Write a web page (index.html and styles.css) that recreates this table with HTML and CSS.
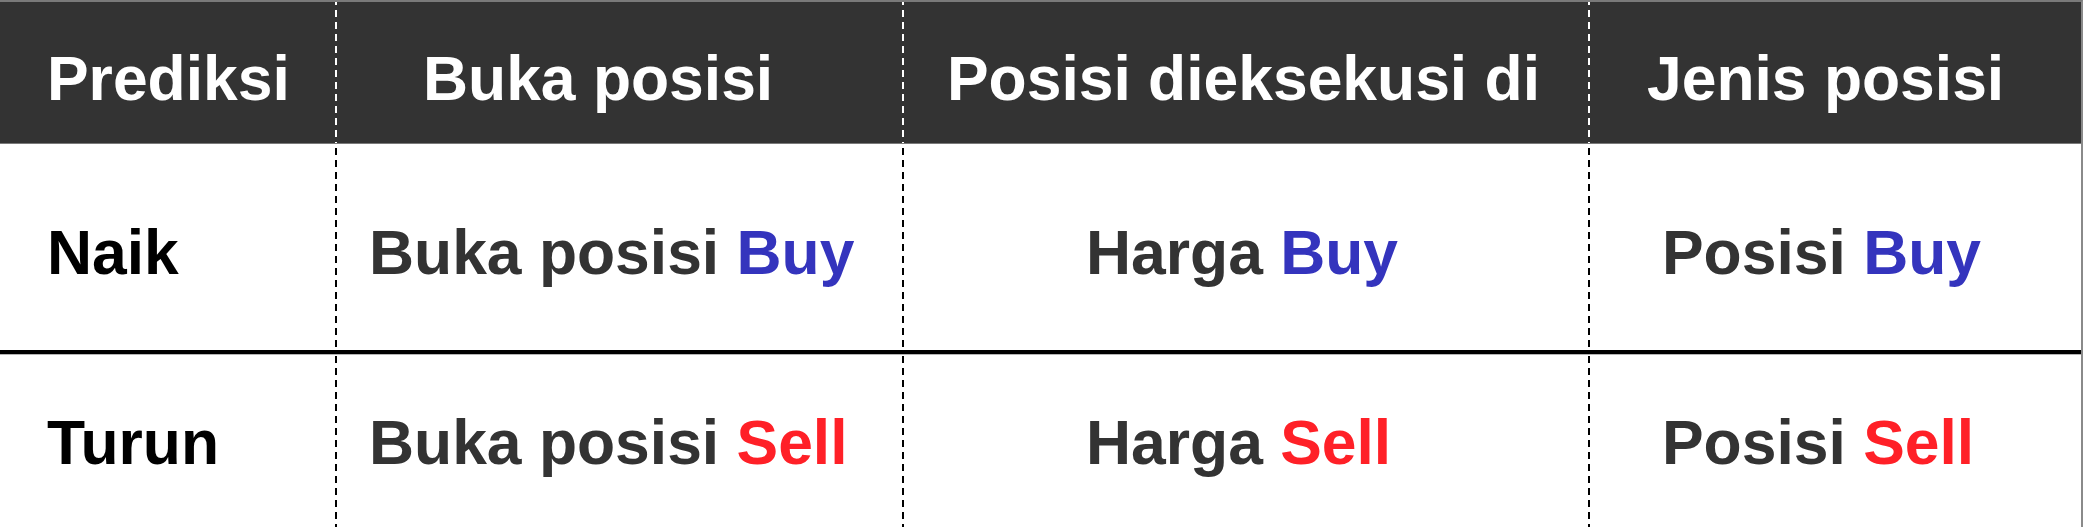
FILE: index.html
```html
<!DOCTYPE html>
<html lang="id">
<head>
<meta charset="utf-8">
<title>Prediksi posisi</title>
<link rel="stylesheet" href="styles.css">
</head>
<body>
<div class="table">
  <div class="row head">
    <div class="cell c1">Prediksi</div>
    <div class="cell c2">Buka posisi</div>
    <div class="cell c3">Posisi dieksekusi di</div>
    <div class="cell c4">Jenis posisi</div>
  </div>
  <div class="row body r1">
    <div class="cell c1 label">Naik</div>
    <div class="cell c2">Buka posisi <span class="buy">Buy</span></div>
    <div class="cell c3">Harga <span class="buy">Buy</span></div>
    <div class="cell c4">Posisi <span class="buy">Buy</span></div>
  </div>
  <div class="row body r2">
    <div class="cell c1 label">Turun</div>
    <div class="cell c2">Buka posisi <span class="sell">Sell</span></div>
    <div class="cell c3">Harga <span class="sell">Sell</span></div>
    <div class="cell c4">Posisi <span class="sell">Sell</span></div>
  </div>
</div>
</body>
</html>
```

FILE: styles.css
```css
html, body {
  margin: 0;
  padding: 0;
  background: #ffffff;
}

body {
  font-family: "Liberation Sans", Arial, sans-serif;
  font-weight: bold;
  font-size: 62.4px;
  overflow: hidden;
}

.table {
  width: 2081px;
  border-top: 2px solid #7a7a7a;
  border-right: 2px solid #8a8a8a;
}

.row {
  display: grid;
  grid-template-columns: 335px 567px 686px 1fr;
}

.cell {
  white-space: nowrap;
  background-repeat: repeat-y;
  background-size: 2px 12px;
}

.c2, .c3, .c4 {
  background-image: linear-gradient(to bottom, #000 7px, transparent 7px);
}

.head {
  height: 141px;
  background: #333333;
  color: #ffffff;
  border-bottom: 1px solid #7a7a7a;
}

.head .cell {
  padding-top: 41px;
  background-position: 0 8px;
}

.head .c2, .head .c3, .head .c4 {
  background-image: linear-gradient(to bottom, #ffffff 7px, transparent 7px);
}

.head .c1 { padding-left: 47px; }
.head .c2 { padding-left: 88px; }
.head .c3 { padding-left: 45px; }
.head .c4 { padding-left: 59px; }

.body {
  color: #333333;
}

.body .c1 { padding-left: 47px; }
.body .c2 { padding-left: 34px; }
.body .c3 { padding-left: 184px; }
.body .c4 { padding-left: 74px; }

.label {
  color: #000000;
}

.r1 {
  height: 206px;
  border-bottom: 4px solid #000000;
  box-shadow: 0 1px 0 #b5b5b5;
  position: relative;
}

.r1 .cell {
  padding-top: 73px;
  background-position: 0 4px;
}

.r2 {
  height: 175px;
}

.r2 .cell {
  padding-top: 53px;
  background-position: 0 2px;
}

.buy {
  color: #3434bd;
}

.sell {
  color: #ff2027;
}
```
